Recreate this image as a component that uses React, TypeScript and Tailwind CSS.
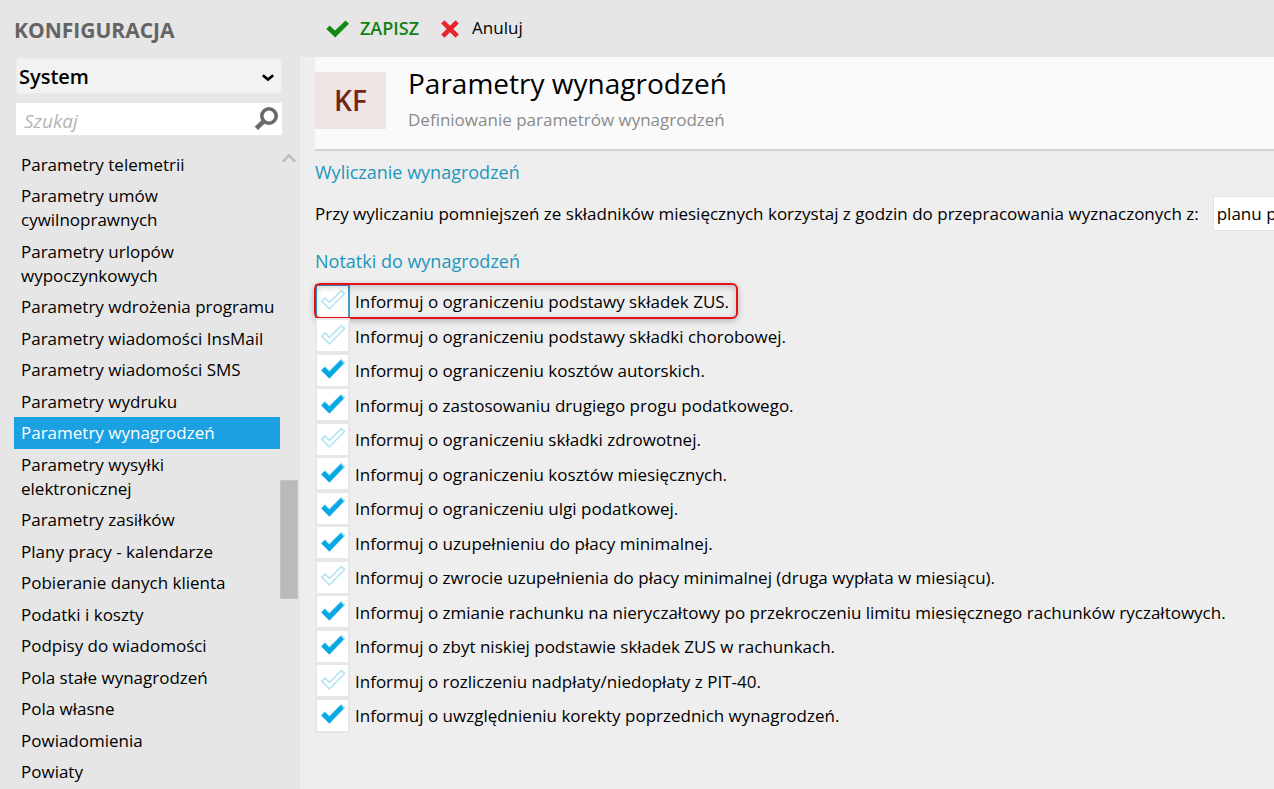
import { useState } from "react";
import clsx from "clsx";

interface Note {
  id: string;
  text: string;
  checked: boolean;
  highlighted?: boolean;
}

const menu = [
  "Parametry telemetrii",
  "Parametry umów cywilnoprawnych",
  "Parametry urlopów wypoczynkowych",
  "Parametry wdrożenia programu",
  "Parametry wiadomości InsMail",
  "Parametry wiadomości SMS",
  "Parametry wydruku",
  "Parametry wynagrodzeń",
  "Parametry wysyłki elektronicznej",
  "Parametry zasiłków",
  "Plany pracy - kalendarze",
  "Pobieranie danych klienta",
  "Podatki i koszty",
  "Podpisy do wiadomości",
  "Pola stałe wynagrodzeń",
  "Pola własne",
  "Powiadomienia",
  "Powiaty",
];

const initialNotes: Note[] = [
  { id: "zus", text: "Informuj o ograniczeniu podstawy składek ZUS.", checked: false, highlighted: true },
  { id: "chorobowa", text: "Informuj o ograniczeniu podstawy składki chorobowej.", checked: false },
  { id: "autorskie", text: "Informuj o ograniczeniu kosztów autorskich.", checked: true },
  { id: "prog", text: "Informuj o zastosowaniu drugiego progu podatkowego.", checked: true },
  { id: "zdrowotna", text: "Informuj o ograniczeniu składki zdrowotnej.", checked: false },
  { id: "miesieczne", text: "Informuj o ograniczeniu kosztów miesięcznych.", checked: true },
  { id: "ulga", text: "Informuj o ograniczeniu ulgi podatkowej.", checked: true },
  { id: "minimalna", text: "Informuj o uzupełnieniu do płacy minimalnej.", checked: true },
  { id: "zwrot", text: "Informuj o zwrocie uzupełnienia do płacy minimalnej (druga wypłata w miesiącu).", checked: false },
  { id: "ryczalt", text: "Informuj o zmianie rachunku na nieryczałtowy po przekroczeniu limitu miesięcznego rachunków ryczałtowych.", checked: true },
  { id: "rachunki", text: "Informuj o zbyt niskiej podstawie składek ZUS w rachunkach.", checked: true },
  { id: "pit40", text: "Informuj o rozliczeniu nadpłaty/niedopłaty z PIT-40.", checked: false },
  { id: "korekta", text: "Informuj o uwzględnieniu korekty poprzednich wynagrodzeń.", checked: true },
];

function Sidebar() {
  const [active, setActive] = useState("Parametry wynagrodzeń");

  return (
    <aside className="flex w-[300px] shrink-0 flex-col bg-[#e6e6e6] pl-[14px]">
      <h2 className="pt-4 text-[21px] leading-7 font-bold text-[#646464]">KONFIGURACJA</h2>

      <div className="mt-[14px] mr-[18px] ml-0.5 grid items-center">
        <select
          aria-label="Obszar konfiguracji"
          className="col-start-1 row-start-1 h-9 w-full appearance-none border border-[#ebebeb] bg-[#f2f2f2] pt-0.5 pl-0.5 text-xl font-semibold text-black"
        >
          <option>System</option>
        </select>
        <svg
          className="pointer-events-none col-start-1 row-start-1 mt-1 mr-2 justify-self-end"
          width="12"
          height="8"
          viewBox="0 0 12 8"
          fill="none"
          stroke="#000"
          strokeWidth="2.6"
        >
          <path d="M0.8 1.2 L6 5.6 L11.2 1.2" />
        </svg>
      </div>

      <div className="mt-[9px] mr-[18px] ml-0.5 flex h-8 items-center bg-white pr-0.5 pl-2">
        <input
          type="text"
          aria-label="Szukaj"
          placeholder="Szukaj"
          className="min-w-0 flex-1 bg-transparent pt-1 text-[19px] italic outline-none placeholder:text-[#b4b4b4]"
        />
        <button aria-label="Wyszukaj">
          <svg width="26" height="26" viewBox="0 0 26 26" fill="none" stroke="#696969">
            <circle cx="15" cy="10" r="7.2" strokeWidth="3.6" />
            <path d="M9.6 15.4 L2.4 22.4" strokeWidth="4.8" />
          </svg>
        </button>
      </div>

      <div className="mt-[14px] flex min-h-0 flex-1">
        <nav className="w-[266px] overflow-hidden">
          {menu.map((item) => (
            <a
              key={item}
              href="#"
              onClick={() => setActive(item)}
              className={clsx(
                "block pt-1 pr-1 pb-[3px] pl-[7px] text-[17px] leading-6 even:pb-1",
                item === active ? "bg-[#1ba1e2] text-white" : "text-black",
              )}
            >
              {item}
            </a>
          ))}
        </nav>
        <div className="flex w-[18px] flex-col items-center">
          <svg className="mt-1" width="14" height="10" viewBox="0 0 14 10" fill="none" stroke="#bdbdbd" strokeWidth="2.6">
            <path d="M1 8.6 L7 2.4 L13 8.6" />
          </svg>
          <div className="mt-[317px] h-[119px] w-full border border-[#c4c4c4] bg-[#bababa]" />
        </div>
      </div>
    </aside>
  );
}

function Toolbar() {
  return (
    <div className="flex h-[57px] items-center bg-[#e6e6e6] pb-0.5 pl-[26px] text-[17px]">
      <button className="flex items-center gap-[10px] text-lg font-semibold text-[#128012]">
        <svg className="mt-0.5" width="24" height="18" viewBox="0 0 24 18">
          <path fill="#128a12" d="M0.3 9 L3.6 5.6 L9 10.4 L19.6 0.4 L23 3.8 L9.2 17.4 Z" />
        </svg>
        ZAPISZ
      </button>
      <button className="ml-[22px] flex items-center gap-[13px] text-black">
        <svg className="mt-0.5" width="18" height="18" viewBox="0 0 18 18" stroke="#e8242c" strokeWidth="4.6">
          <path d="M1.8 1.8 L16.2 16.2 M16.2 1.8 L1.8 16.2" />
        </svg>
        Anuluj
      </button>
    </div>
  );
}

function NoteRow({ note, onToggle }: { note: Note; onToggle: () => void }) {
  return (
    <label className="relative flex h-[34px] w-fit items-center gap-[7px] pl-0.5 text-[17px] even:h-[35px]">
      <span className="grid place-items-center">
        <input
          type="checkbox"
          checked={note.checked}
          onChange={onToggle}
          className={clsx(
            "col-start-1 row-start-1 h-[31px] w-[31px] appearance-none bg-white outline-2",
            note.highlighted ? "outline-[#3c9ccc]" : "outline-[#e7e7e7]",
          )}
        />
        <svg
          className="pointer-events-none col-start-1 row-start-1 mb-0.5"
          width="26"
          height="22"
          viewBox="0 0 26 22"
        >
          <path
            fill="none"
            stroke="#b4e4f6"
            strokeWidth="1.6"
            d="M1.8 12.2 L5 9.2 L9.4 13.4 L21.4 1.6 L24.6 4.6 L9.4 19.8 Z"
          />
          {note.checked && (
            <path fill="#06a8e4" d="M1.4 12.4 L4.8 9 L9.4 13.4 L20.8 2 L23.8 5.2 L9.4 20.4 Z" />
          )}
        </svg>
      </span>
      <span className="pt-0.5">{note.text}</span>
      {note.highlighted && (
        <span className="pointer-events-none absolute -inset-y-px -right-[9px] -left-px rounded-md border-2 border-[#e81018] shadow-[0_2px_6px_rgba(0,0,0,0.25),inset_0_2px_6px_rgba(0,0,0,0.2)]" />
      )}
    </label>
  );
}

export default function App() {
  const [notes, setNotes] = useState(initialNotes);

  const toggle = (id: string) =>
    setNotes(notes.map((n) => (n.id === id ? { ...n, checked: !n.checked } : n)));

  return (
    <div className="flex h-screen overflow-hidden bg-[#eeeeee] font-['Open_Sans','Noto_Sans',sans-serif] text-black">
      <Sidebar />

      <div className="flex min-w-0 flex-1 flex-col">
        <Toolbar />

        <main className="min-h-0 flex-1 overflow-hidden pl-[15px]">
          <header className="flex h-[94px] gap-[22px] border-b-2 border-[#d2d2d2] bg-[#fafafa] pt-[15px]">
            <div className="flex h-[57px] w-[71px] items-center justify-center bg-[#eee4e3] pb-0.5 text-[28px] font-semibold text-[#702814]">
              KF
            </div>
            <div className="-mt-[5px]">
              <h1 className="text-[28px] leading-8">Parametry wynagrodzeń</h1>
              <p className="mt-[9px] text-[17px] leading-6 text-[#8a8a8a]">Definiowanie parametrów wynagrodzeń</p>
            </div>
          </header>

          <section>
            <h2 className="mt-[9px] text-lg leading-6 text-[#2196bb]">Wyliczanie wynagrodzeń</h2>
            <div className="mt-3 flex items-center gap-[14px] whitespace-nowrap text-[17px]">
              <label htmlFor="godziny">
                Przy wyliczaniu pomniejszeń ze składników miesięcznych korzystaj z godzin do przepracowania wyznaczonych z:
              </label>
              <select
                id="godziny"
                className="h-[35px] w-72 shrink-0 appearance-none border border-[#e2e2e2] bg-white pl-[3px]"
              >
                <option>planu p</option>
              </select>
            </div>
          </section>

          <section>
            <h2 className="mt-[18px] text-lg leading-6 text-[#2196bb]">Notatki do wynagrodzeń</h2>
            <div className="mt-[11px] flex flex-col">
              {notes.map((note) => (
                <NoteRow key={note.id} note={note} onToggle={() => toggle(note.id)} />
              ))}
            </div>
          </section>
        </main>
      </div>
    </div>
  );
}
